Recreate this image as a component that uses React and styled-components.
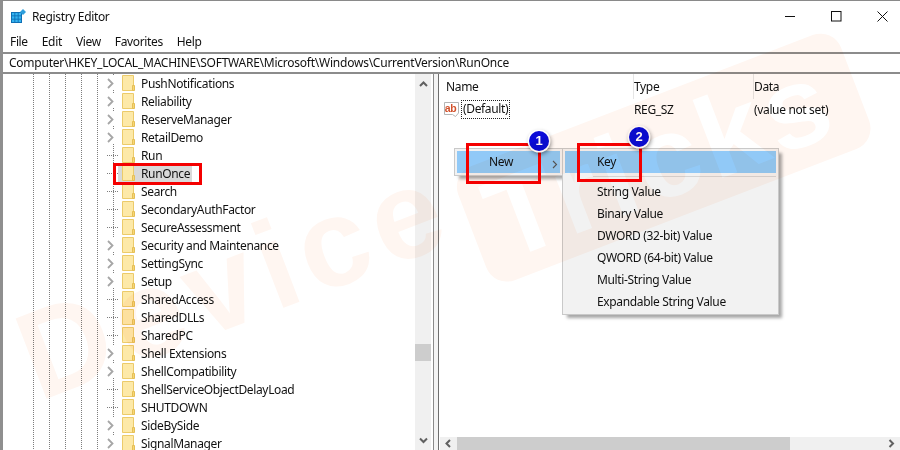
import React from 'react';
import styled, { createGlobalStyle } from 'styled-components';

const treeItems = [
  { name: 'PushNotifications', expandable: true },
  { name: 'Reliability', expandable: true },
  { name: 'ReserveManager', expandable: true },
  { name: 'RetailDemo', expandable: true },
  { name: 'Run' },
  { name: 'RunOnce', selected: true },
  { name: 'Search' },
  { name: 'SecondaryAuthFactor' },
  { name: 'SecureAssessment' },
  { name: 'Security and Maintenance', expandable: true },
  { name: 'SettingSync', expandable: true },
  { name: 'Setup', expandable: true },
  { name: 'SharedAccess' },
  { name: 'SharedDLLs' },
  { name: 'SharedPC' },
  { name: 'Shell Extensions', expandable: true },
  { name: 'ShellCompatibility', expandable: true },
  { name: 'ShellServiceObjectDelayLoad' },
  { name: 'SHUTDOWN' },
  { name: 'SideBySide', expandable: true },
  { name: 'SignalManager', expandable: true },
];

const valueKinds = [
  'String Value',
  'Binary Value',
  'DWORD (32-bit) Value',
  'QWORD (64-bit) Value',
  'Multi-String Value',
  'Expandable String Value',
];

function AppIcon() {
  return (
    <svg width="15" height="15" viewBox="0 0 15 15">
      <rect x="0" y="3" width="11" height="11" fill="#0f6fb4" />
      <g fill="#35b4f0">
        <rect x="1" y="4" width="2.4" height="2.4" />
        <rect x="4.3" y="4" width="2.4" height="2.4" />
        <rect x="7.6" y="4" width="2.4" height="2.4" />
        <rect x="1" y="7.3" width="2.4" height="2.4" />
        <rect x="4.3" y="7.3" width="2.4" height="2.4" />
        <rect x="7.6" y="7.3" width="2.4" height="2.4" />
        <rect x="1" y="10.6" width="2.4" height="2.4" />
        <rect x="4.3" y="10.6" width="2.4" height="2.4" />
        <rect x="7.6" y="10.6" width="2.4" height="2.4" />
      </g>
      <path d="M12 0 L15 3 L12 6 L9 3 Z" fill="#2f9fdc" />
    </svg>
  );
}

function Folder() {
  return (
    <svg width="13" height="16" viewBox="0 0 13 16">
      <path d="M0.5 0.5 H11.5 V15.5 H0.5 Z" fill="#fde9a8" stroke="#eccb6a" />
      <path d="M10.5 10.5 H12.5 V15.5 H10.5 Z" fill="#f7d675" stroke="#e5bf55" />
    </svg>
  );
}

function Chevron() {
  return (
    <svg width="7" height="11" viewBox="0 0 7 11">
      <path d="M1 1 L5.5 5.5 L1 10" fill="none" stroke="#a6a6a6" strokeWidth="1.8" />
    </svg>
  );
}

function ValueIcon() {
  return (
    <svg width="15" height="15" viewBox="0 0 15 15">
      <path d="M0.5 0.5 H14.5 V11 L11.5 14.5 L8.5 12.5 H0.5 Z" fill="#fff" stroke="#b5b5b5" />
      <text x="0.8" y="9.8" fontSize="10.5" fontWeight="700" fontFamily="Liberation Sans, sans-serif" fill="#d2502a">ab</text>
    </svg>
  );
}

function ArrowIcon({ dir }) {
  const paths = {
    up: 'M1 6 L4.5 2.5 L8 6',
    down: 'M1 2.5 L4.5 6 L8 2.5',
    left: 'M6 1 L2.5 4.5 L6 8',
    right: 'M2.5 1 L6 4.5 L2.5 8',
  };
  return (
    <svg width="9" height="9" viewBox="0 0 9 9">
      <path d={paths[dir]} fill="none" stroke="#606060" strokeWidth="2" />
    </svg>
  );
}

export default function App() {
  return (
    <Window>
      <GlobalStyle />
      <TitleBar>
        <TitleIcon><AppIcon /></TitleIcon>
        <TitleText>Registry Editor</TitleText>
        <WindowControls>
          <svg width="11" height="11" viewBox="0 0 11 11"><path d="M0 5.5 H10" stroke="#111" fill="none" /></svg>
          <svg width="11" height="11" viewBox="0 0 11 11"><rect x="0.5" y="0.5" width="9.5" height="9.5" stroke="#111" fill="none" /></svg>
          <svg width="11" height="11" viewBox="0 0 11 11"><path d="M0.5 0.5 L10.5 10.5 M10.5 0.5 L0.5 10.5" stroke="#111" fill="none" /></svg>
        </WindowControls>
      </TitleBar>
      <MenuBar>
        <MenuLabel>File</MenuLabel>
        <MenuLabel>Edit</MenuLabel>
        <MenuLabel>View</MenuLabel>
        <MenuLabel>Favorites</MenuLabel>
        <MenuLabel>Help</MenuLabel>
      </MenuBar>
      <AddressBar>Computer\HKEY_LOCAL_MACHINE\SOFTWARE\Microsoft\Windows\CurrentVersion\RunOnce</AddressBar>
      <Panes>
        <TreePane>
          <TreeList>
            {treeItems.map((item) => (
              <TreeRow key={item.name}>
                <Expander $expandable={item.expandable}>{item.expandable && <Chevron />}</Expander>
                <TreeNode $selected={item.selected}>
                  <Folder />
                  <TreeLabel>{item.name}</TreeLabel>
                </TreeNode>
              </TreeRow>
            ))}
          </TreeList>
          <VScroll>
            <ScrollArrow><ArrowIcon dir="up" /></ScrollArrow>
            <VThumb />
            <ScrollArrow><ArrowIcon dir="down" /></ScrollArrow>
          </VScroll>
        </TreePane>
        <Splitter />
        <ValuesPane>
          <ValuesBody>
            <HeaderRow>
              <HeaderCell $width={188}>Name</HeaderCell>
              <HeaderCell $width={120}>Type</HeaderCell>
              <HeaderCell>Data</HeaderCell>
            </HeaderRow>
            <ValueRow>
              <NameCell>
                <ValueIcon />
                <FocusLabel>(Default)</FocusLabel>
              </NameCell>
              <ValueCell $width={120}>REG_SZ</ValueCell>
              <ValueCell>(value not set)</ValueCell>
            </ValueRow>
            <NewMenu>
              <NewItem>
                New
                <NewArrow>
                  <svg width="6" height="9" viewBox="0 0 6 9"><path d="M1 1 L4.5 4.5 L1 8" fill="none" stroke="#555" strokeWidth="1.1" /></svg>
                </NewArrow>
              </NewItem>
            </NewMenu>
            <KindMenu>
              <KeyItem>Key</KeyItem>
              <MenuSeparator />
              {valueKinds.map((kind) => (
                <KindItem key={kind}>{kind}</KindItem>
              ))}
            </KindMenu>
          </ValuesBody>
          <HScroll>
            <HArrow><ArrowIcon dir="left" /></HArrow>
            <HThumb />
            <HTrack />
            <HArrow><ArrowIcon dir="right" /></HArrow>
          </HScroll>
        </ValuesPane>
      </Panes>

      <SelectBox />
      <NewBox />
      <KeyBox />
      <StepBadge $left={526} $top={130}>1</StepBadge>
      <StepBadge $left={626} $top={126}>2</StepBadge>

      <Watermark>
        <WatermarkWord>Device</WatermarkWord>
        <WatermarkBadge>Tricks</WatermarkBadge>
      </Watermark>
    </Window>
  );
}

const GlobalStyle = createGlobalStyle`
  html, body {
    margin: 0;
    padding: 0;
    background: #fff;
  }
`;

const uiFont = `"Noto Sans", "Open Sans", sans-serif`;

const Window = styled.div`
  position: relative;
  width: 900px;
  height: 450px;
  box-sizing: border-box;
  overflow: hidden;
  display: flex;
  flex-direction: column;
  background: #fff;
  border-top: 1px solid #8a8a8a;
  border-left: 3px solid #8f8f8f;
  font-family: ${uiFont};
  font-size: 12px;
  letter-spacing: -0.35px;
  color: #111;
`;

const TitleBar = styled.div`
  height: 31px;
  flex: none;
  display: flex;
  align-items: center;
`;

const TitleIcon = styled.div`
  width: 29px;
  padding-left: 8px;
  box-sizing: border-box;
  display: flex;
  align-items: center;
`;

const TitleText = styled.div`
  flex: 1;
`;

const WindowControls = styled.div`
  display: flex;
  gap: 35px;
  padding-right: 12px;
`;

const MenuBar = styled.div`
  height: 20px;
  flex: none;
  display: flex;
  align-items: center;
  padding-left: 7px;
  gap: 14px;
`;

const MenuLabel = styled.div`
  line-height: 20px;
`;

const AddressBar = styled.div`
  height: 18px;
  flex: none;
  line-height: 18px;
  padding-left: 6px;
  letter-spacing: -0.24px;
  border-top: 2px solid #8c8c8c;
  border-bottom: 2px solid #8c8c8c;
`;

const Panes = styled.div`
  flex: 1;
  min-height: 0;
  display: flex;
`;

const TreePane = styled.div`
  width: 429px;
  flex: none;
  display: flex;
`;

const dots = (x) => `linear-gradient(to bottom, #7d7d7d 50%, transparent 50%) ${x}px 0 / 1px 2px repeat-y`;

const TreeList = styled.div`
  flex: 1;
  overflow: hidden;
  background: ${dots(30)}, ${dots(46)}, ${dots(62)}, ${dots(78)}, ${dots(94)}, ${dots(110)};
`;

const TreeRow = styled.div`
  height: 18px;
  display: flex;
  align-items: center;
  padding-left: 104px;
`;

const Expander = styled.div`
  width: 11px;
  height: 14px;
  flex: none;
  display: flex;
  align-items: center;
  background: ${(p) =>
    p.$expandable
      ? '#fff'
      : 'linear-gradient(to right, #7d7d7d 50%, transparent 50%) 6px 7px / 2px 1px repeat-x'};
`;

const TreeNode = styled.div`
  height: 17px;
  display: flex;
  align-items: center;
  padding: 0 2px 0 4px;
  background: ${(p) => (p.$selected ? '#d9d9d9' : 'transparent')};
`;

const TreeLabel = styled.div`
  line-height: 17px;
  margin-left: 6px;
  white-space: nowrap;
`;

const VScroll = styled.div`
  width: 16px;
  flex: none;
  position: relative;
  background: #f0f0f0;
  display: flex;
  flex-direction: column;
  justify-content: space-between;
  margin-right: 1px;
`;

const VThumb = styled.div`
  position: absolute;
  top: 270px;
  left: 0;
  width: 100%;
  height: 17px;
  background: #cdcdcd;
`;

const ScrollArrow = styled.div`
  height: 20px;
  display: flex;
  align-items: center;
  justify-content: center;
`;

const Splitter = styled.div`
  width: 4px;
  flex: none;
  border-left: 1px solid #8a8a8a;
  border-right: 1px solid #6f6f6f;
  background: #f4f4f4;
  margin-left: 1px;
`;

const ValuesPane = styled.div`
  flex: 1;
  min-width: 0;
  display: flex;
  flex-direction: column;
`;

const ValuesBody = styled.div`
  flex: 1;
  min-height: 0;
  padding-left: 7px;
`;

const HeaderRow = styled.div`
  height: 25px;
  display: flex;
`;

const HeaderCell = styled.div`
  width: ${(p) => (p.$width ? `${p.$width}px` : 'auto')};
  box-sizing: border-box;
  line-height: 25px;
  border-right: ${(p) => (p.$width ? '1px solid #e5e5e5' : 'none')};
`;

const ValueRow = styled.div`
  height: 20px;
  display: flex;
  align-items: center;
`;

const NameCell = styled.div`
  width: 188px;
  display: flex;
  align-items: center;
  gap: 2px;
  margin-left: -2px;
  margin-right: 2px;
`;

const FocusLabel = styled.div`
  height: 19px;
  line-height: 18px;
  padding: 0 2px;
  box-sizing: border-box;
  outline: 1px dotted #222;
  outline-offset: -1px;
`;

const ValueCell = styled.div`
  width: ${(p) => (p.$width ? `${p.$width}px` : 'auto')};
`;

const menuChrome = `
  position: absolute;
  box-sizing: border-box;
  background: #f2f2f2;
  border: 1px solid #c9c9c9;
  padding: 2px;
  box-shadow: 4px 4px 3px -1px rgba(0, 0, 0, 0.35);
`;

const NewMenu = styled.div`
  ${menuChrome}
  left: 451px;
  top: 147px;
  width: 109px;
  height: 28px;
`;

const NewItem = styled.div`
  height: 22px;
  line-height: 22px;
  padding-left: 32px;
  background: #91c9f7;
  position: relative;
`;

const NewArrow = styled.span`
  position: absolute;
  right: 2px;
  top: 3px;
`;

const KindMenu = styled.div`
  ${menuChrome}
  left: 559px;
  top: 147px;
  width: 217px;
  height: 167px;
`;

const KeyItem = styled.div`
  height: 22px;
  line-height: 22px;
  padding-left: 32px;
  background: #91c9f7;
`;

const MenuSeparator = styled.div`
  height: 1px;
  margin: 3px 0 4px 28px;
  background: #d4d4d4;
`;

const KindItem = styled.div`
  height: 22px;
  line-height: 22px;
  padding-left: 32px;
  white-space: nowrap;
`;

const HScroll = styled.div`
  height: 13px;
  flex: none;
  display: flex;
  margin-left: 1px;
  background: #f0f0f0;
`;

const HArrow = styled.div`
  width: 17px;
  flex: none;
  display: flex;
  align-items: center;
  justify-content: center;
`;

const HThumb = styled.div`
  width: 333px;
  flex: none;
  background: #cdcdcd;
`;

const HTrack = styled.div`
  flex: 1;
`;

const redBox = `
  position: absolute;
  box-sizing: border-box;
  border: 3px solid #f40000;
`;

const SelectBox = styled.div`
  ${redBox}
  left: 110px;
  top: 162px;
  width: 89px;
  height: 22px;
`;

const NewBox = styled.div`
  ${redBox}
  left: 463px;
  top: 142px;
  width: 75px;
  height: 41px;
`;

const KeyBox = styled.div`
  ${redBox}
  left: 574px;
  top: 142px;
  width: 65px;
  height: 39px;
`;

const StepBadge = styled.div`
  position: absolute;
  left: ${(p) => p.$left}px;
  top: ${(p) => p.$top}px;
  width: 20px;
  height: 20px;
  border-radius: 50%;
  background: #0b0bd8;
  color: #fff;
  font: 700 13px/20px "Liberation Sans", sans-serif;
  letter-spacing: 0;
  text-align: center;
  box-shadow: 0 0 0 1.5px #fff, 1px 2px 4px 1px rgba(0, 0, 0, 0.45);
`;

const Watermark = styled.div`
  position: absolute;
  left: -3px;
  top: 300px;
  display: flex;
  align-items: flex-start;
  transform: rotate(-21deg);
  transform-origin: left top;
  mix-blend-mode: multiply;
  pointer-events: none;
  white-space: nowrap;
  font: 700 125px/130px "Liberation Sans", sans-serif;
  letter-spacing: 8px;
`;

const WatermarkWord = styled.div`
  width: 466px;
  color: #fff6f1;
`;

const WatermarkBadge = styled.div`
  width: 410px;
  height: 122px;
  box-sizing: border-box;
  margin-top: 43px;
  padding-left: 20px;
  color: #fff;
  background: #fff6f1;
  border-radius: 22px;
  font-size: 115px;
  line-height: 122px;
  letter-spacing: 5px;
`;
